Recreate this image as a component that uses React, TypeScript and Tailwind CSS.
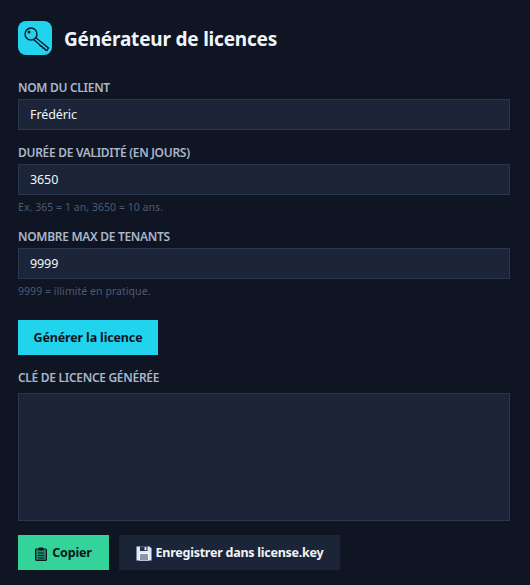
import React from "react";

function Field({ label, value, hint }: { label: string; value: string; hint?: string }) {
  return (
    <div className="flex flex-col">
      <label className="text-[12px] leading-[16px] font-semibold tracking-[-0.3px] text-[#a9b6cb] uppercase mb-[3px] h-[16px]">{label}</label>
      <div className="h-[31px] border border-[#2b3750] bg-[#1c2537] px-[11px] pt-[2px] flex items-center text-[12.5px] tracking-[-0.1px] text-[#f1f5f9]">{value}</div>
      {hint && <p className="text-[10.5px] leading-[14px] mt-[5px] tracking-[0.05px] text-[#4c5b74]">{hint}</p>}
    </div>
  );
}

export default function App() {
  return (
    <div className="w-[530px] h-[585px] overflow-hidden bg-[#0f1522] pl-[18px] pr-[20px] pt-[21px] font-['Noto_Sans',sans-serif]">
      <div className="flex items-center gap-3 h-[34px]">
        <div className="w-[34px] h-[34px] rounded-[8px] bg-[#22d3ee] flex items-center justify-center">
          <svg width="34" height="34" viewBox="0 0 34 34" fill="none" stroke="#0c1a2b" strokeWidth="1.4" strokeLinejoin="round">
            <circle cx="13" cy="13" r="6" />
            <circle cx="11" cy="11" r="1.5" fill="#0c1a2b" stroke="none" />
            <path d="M17.5 16.5 L30.5 27 L29 29.5 L27.5 29 L26.5 27.5 L25 27 L24 25.5 L22.5 25 L21.5 23.5 L15.5 18.5" />
          </svg>
        </div>
        <h1 className="mt-[3px] text-[19px] leading-none font-bold tracking-[-0.2px] text-[#f1f5f9]">Générateur de licences</h1>
      </div>

      <div className="mt-[25px] flex flex-col gap-[15px]">
        <Field label="Nom du client" value="Frédéric" />
        <Field label="Durée de validité (en jours)" value="3650" hint="Ex. 365 = 1 an, 3650 = 10 ans." />
        <Field label="Nombre max de tenants" value="9999" hint="9999 = illimité en pratique." />
      </div>

      <button className="mt-[22px] pt-[2px] block w-[140px] h-[35px] bg-[#22d3ee] text-[#0f1522] text-[12.5px] tracking-[-0.15px] font-bold">Générer la licence</button>

      <div className="mt-[15px] h-[16px] text-[12px] leading-[16px] font-semibold tracking-[-0.3px] text-[#a9b6cb] uppercase">Clé de licence générée</div>
      <div className="mt-[7px] h-[128px] border border-[#2b3750] bg-[#1c2537]" />

      <div className="mt-[14px] flex gap-[10px]">
        <button className="w-[91px] h-[35px] bg-[#34d399] text-[#0f1522] text-[12.5px] tracking-[-0.15px] font-bold flex items-center justify-center gap-[5px]">
          <svg width="12" height="14" viewBox="0 0 12 14" className="mt-[2px]">
            <rect x="0.6" y="2" width="10.8" height="11.4" rx="1" fill="#1f8a68" stroke="#0f1522" strokeWidth="1.2" />
            <rect x="3.5" y="0.5" width="5" height="3" rx="0.8" fill="#0f1522" />
            <path d="M3 6h6M3 8.5h6M3 11h6" stroke="#0f1522" strokeWidth="1" />
          </svg>
          <span className="pt-[2px]">Copier</span>
        </button>
        <button className="w-[221px] h-[35px] bg-[#1c2537] text-[#f1f5f9] text-[12.5px] tracking-[-0.25px] font-bold flex items-center justify-center gap-[4px]">
          <svg width="16" height="15" viewBox="0 0 16 15" className="mt-[2px]">
            <path d="M0.5 0.5h13l2 2v12H0.5z" fill="#dbeafe" />
            <rect x="4" y="0.5" width="7.5" height="4.5" fill="#27324a" />
            <rect x="8.5" y="1.2" width="2" height="3" fill="#dbeafe" />
            <rect x="3" y="7" width="10" height="7.5" fill="#f8fafc" />
            <path d="M4 9h8M4 11h8M4 13h8" stroke="#27324a" strokeWidth="1" />
          </svg>
          <span className="pt-[2px]">Enregistrer dans license.key</span>
        </button>
      </div>
    </div>
  );
}
